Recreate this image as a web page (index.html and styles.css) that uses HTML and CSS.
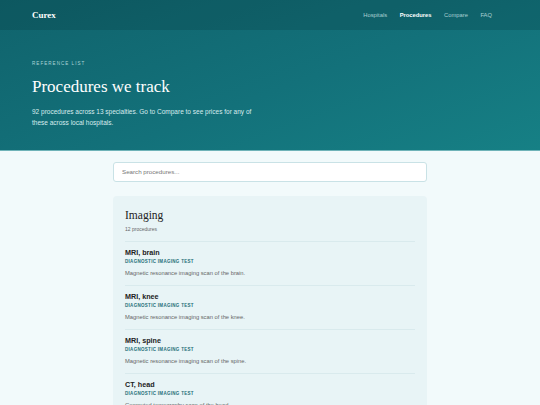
FILE: index.html
```html
<!DOCTYPE html>
<html lang="en">

<head>
    <meta charset="UTF-8">
    <title>Procedures - Curex</title>

    <link rel="stylesheet" href="styles.css">
</head>

<body>

    <div class="top">
        <header class="banner">
            <a class="logo" href="#">Curex</a>
            <nav class="menu">
                <a href="#">Hospitals</a>
                <a href="#" class="aktiv">Procedures</a>
                <a href="#">Compare</a>
                <a href="#">FAQ</a>
            </nav>
        </header>

        <div class="hero">
            <p class="eyebrow">Reference list</p>
            <h1>Procedures we track</h1>
            <p class="intro">92 procedures across 13 specialties. Go to Compare to see prices for any of these across local hospitals.</p>
        </div>
    </div>

    <main>
        <input class="soeg" type="text" placeholder="Search procedures...">

        <section class="gruppe">
            <h2>Imaging</h2>
            <p class="antal">12 procedures</p>

            <ul class="liste">
                <li>
                    <h3>MRI, brain</h3>
                    <p class="type">Diagnostic imaging test</p>
                    <p class="besk">Magnetic resonance imaging scan of the brain.</p>
                </li>
                <li>
                    <h3>MRI, knee</h3>
                    <p class="type">Diagnostic imaging test</p>
                    <p class="besk">Magnetic resonance imaging scan of the knee.</p>
                </li>
                <li>
                    <h3>MRI, spine</h3>
                    <p class="type">Diagnostic imaging test</p>
                    <p class="besk">Magnetic resonance imaging scan of the spine.</p>
                </li>
                <li>
                    <h3>CT, head</h3>
                    <p class="type">Diagnostic imaging test</p>
                    <p class="besk">Computed tomography scan of the head.</p>
                </li>
                <li>
                    <h3>CT, chest</h3>
                    <p class="type">Diagnostic imaging test</p>
                    <p class="besk">Computed tomography scan of the chest.</p>
                </li>
            </ul>
        </section>
    </main>

</body>

</html>
```

FILE: styles.css
```css
body {
    margin: 0;
    background-color: #f2fafb;
    font-family: "Liberation Sans", Arial, sans-serif;
    color: #222;
}

p,
h1,
h2,
h3,
ul {
    margin: 0;
    padding: 0;
}

.top {
    background: linear-gradient(160deg, #10636c 0%, #13717a 55%, #168085 100%);
    border-bottom: 1px solid #6fb3b8;
}

.banner {
    height: 30px;
    display: flex;
    align-items: center;
    justify-content: space-between;
    padding: 0 48px 0 32px;
    background-color: rgba(6, 50, 56, 0.22);
}

.logo {
    font-family: "Liberation Serif", Georgia, serif;
    font-weight: bold;
    font-size: 9px;
    color: #fff;
    text-decoration: none;
}

.menu {
    display: flex;
    gap: 12.5px;
}

.menu a {
    font-size: 5.8px;
    color: #a9d0d3;
    text-decoration: none;
}

.menu a.aktiv {
    color: #fff;
    font-weight: bold;
}

.hero {
    padding: 30px 32px 22px;
    color: #fff;
}

.eyebrow {
    font-size: 4.6px;
    line-height: 8px;
    letter-spacing: 1px;
    text-transform: uppercase;
    color: #a9d3d6;
}

.hero h1 {
    margin-top: 9px;
    font-family: "Liberation Serif", Georgia, serif;
    font-weight: normal;
    font-size: 17px;
    line-height: 20px;
}

.intro {
    margin-top: 8.5px;
    max-width: 232px;
    font-size: 6.5px;
    line-height: 11px;
    color: #d8ecee;
}

main {
    width: 314px;
    margin: 0 auto;
    padding-top: 11px;
}

.soeg {
    display: block;
    box-sizing: border-box;
    width: 100%;
    height: 20px;
    padding: 0 8px;
    border: 1px solid #c9e2e6;
    border-radius: 3px;
    background-color: #fff;
    font-family: "Liberation Sans", Arial, sans-serif;
    font-size: 6.2px;
    color: #333;
}

.soeg::placeholder {
    color: #777;
}

.gruppe {
    margin-top: 14px;
    padding: 12px 12px 0;
    background-color: #e8f4f6;
    border-radius: 4px;
}

.gruppe h2 {
    font-family: "Liberation Serif", Georgia, serif;
    font-weight: normal;
    font-size: 11.5px;
    line-height: 14px;
    color: #222;
}

.antal {
    margin-top: 4px;
    font-size: 5px;
    line-height: 7px;
    color: #666;
}

.liste {
    margin-top: 8px;
    list-style: none;
}

.liste li {
    border-top: 1px solid #d9eaed;
    padding: 6px 0 8px;
}

.liste h3 {
    font-size: 7.2px;
    line-height: 9px;
    color: #222;
}

.type {
    margin-top: 1px;
    font-size: 4.5px;
    line-height: 7px;
    font-weight: bold;
    letter-spacing: 0.3px;
    text-transform: uppercase;
    color: #1f6f78;
}

.besk {
    margin-top: 4px;
    font-size: 5.8px;
    line-height: 8px;
    color: #666;
}
```
